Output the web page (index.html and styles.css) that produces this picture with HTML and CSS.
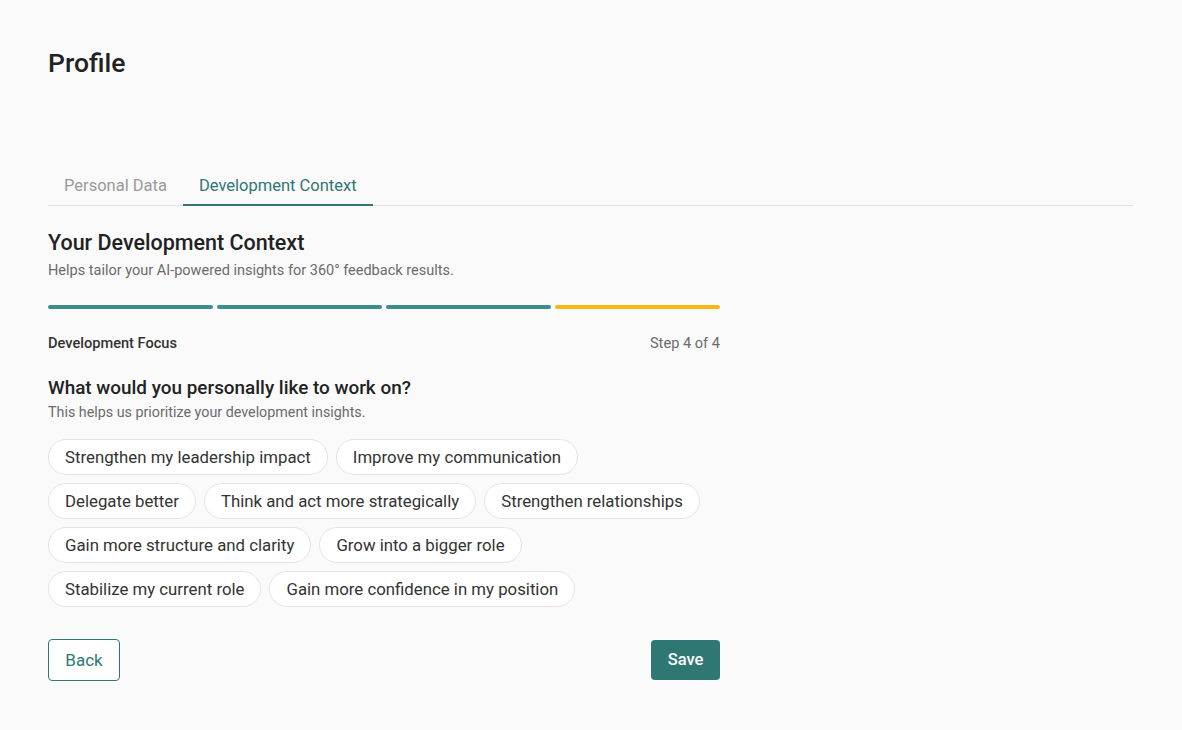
FILE: index.html
```html
<!DOCTYPE html>
<html lang="en">
<head>
    <meta charset="UTF-8">
    <meta name="viewport" content="width=device-width, initial-scale=1.0">
    <title>Profile</title>
    <link rel="stylesheet" href="styles.css">
</head>
<body>
    <div class="page">
        <h1 class="page-title">Profile</h1>

        <nav class="tabs">
            <button class="tab-button">Personal Data</button>
            <button class="tab-button active">Development Context</button>
        </nav>

        <section class="context">
            <h2>Your Development Context</h2>
            <p class="subtitle">Helps tailor your AI-powered insights for 360° feedback results.</p>

            <div class="progress">
                <span class="step done"></span>
                <span class="step done"></span>
                <span class="step done"></span>
                <span class="step current"></span>
            </div>

            <div class="step-info">
                <span class="step-name">Development Focus</span>
                <span class="step-count">Step 4 of 4</span>
            </div>

            <h3>What would you personally like to work on?</h3>
            <p class="hint">This helps us prioritize your development insights.</p>

            <div class="chips">
                <button class="chip">Strengthen my leadership impact</button>
                <button class="chip">Improve my communication</button>
                <button class="chip">Delegate better</button>
                <button class="chip">Think and act more strategically</button>
                <button class="chip">Strengthen relationships</button>
                <button class="chip">Gain more structure and clarity</button>
                <button class="chip">Grow into a bigger role</button>
                <button class="chip">Stabilize my current role</button>
                <button class="chip">Gain more confidence in my position</button>
            </div>

            <div class="actions">
                <button class="btn-back">Back</button>
                <button class="btn-save">Save</button>
            </div>
        </section>
    </div>
</body>
</html>
```

FILE: styles.css
```css
body {
    margin: 0;
    background: #fafafa;
    font-family: Roboto, "Liberation Sans", sans-serif;
    color: #1f1f1f;
}
.page {
    padding: 46px 48px 0 48px;
    width: 1085px;
}
.page-title {
    margin: 0;
    font-size: 26.5px;
    font-weight: 500;
    line-height: 34px;
    color: #222;
}
.tabs {
    display: flex;
    margin-top: 90px;
    border-bottom: 1px solid #e2e2e2;
}
.tab-button {
    font-family: inherit;
    font-size: 16.5px;
    line-height: 20px;
    background: none;
    border: none;
    border-bottom: 2px solid transparent;
    margin-bottom: -1px;
    padding: 6px 16px 8px 16px;
    color: #999;
    cursor: pointer;
}
.tab-button.active {
    color: #2e7773;
    border-bottom-color: #2e7773;
}
.context {
    width: 672px;
}
.context h2 {
    margin: 23px 0 0 0;
    font-size: 21.5px;
    font-weight: 500;
    line-height: 28px;
    color: #222;
}
.subtitle {
    margin: 5px 0 0 0;
    font-size: 14.5px;
    line-height: 18px;
    color: #6b6b6b;
}
.progress {
    display: flex;
    gap: 4px;
    margin-top: 25px;
}
.step {
    flex: 1;
    height: 4px;
    border-radius: 2px;
}
.step.done {
    background: #3b8e89;
}
.step.current {
    background: #f4b916;
}
.step-info {
    display: flex;
    justify-content: space-between;
    margin-top: 25px;
    font-size: 14.6px;
    line-height: 18px;
}
.step-name {
    font-weight: 500;
    color: #333;
}
.step-count {
    color: #6b6b6b;
}
.context h3 {
    margin: 24px 0 0 0;
    font-size: 18.9px;
    font-weight: 500;
    line-height: 24px;
    color: #222;
}
.hint {
    margin: 3px 0 0 0;
    font-size: 14.3px;
    line-height: 18px;
    color: #6b6b6b;
}
.chips {
    display: flex;
    flex-wrap: wrap;
    gap: 8px;
    margin-top: 18px;
}
.chip {
    font-family: inherit;
    font-size: 16.8px;
    height: 36px;
    padding: 0 16px 1px 16px;
    border: 1px solid #e4e4e4;
    border-radius: 18px;
    background: #fff;
    color: #333;
    cursor: pointer;
}
.actions {
    display: flex;
    justify-content: space-between;
    align-items: center;
    margin-top: 32px;
}
.btn-back {
    font-family: inherit;
    font-size: 17px;
    height: 42px;
    padding: 0 16px 1px 16px;
    width: 72px;
    background: #fff;
    color: #2e7773;
    border: 1px solid #2e7773;
    border-radius: 4px;
    cursor: pointer;
}
.btn-save {
    font-family: inherit;
    font-size: 16.5px;
    font-weight: 500;
    height: 40px;
    width: 69px;
    padding: 0 0 1px 0;
    background: #2e7773;
    color: #fff;
    border: none;
    border-radius: 4px;
    cursor: pointer;
}
```
